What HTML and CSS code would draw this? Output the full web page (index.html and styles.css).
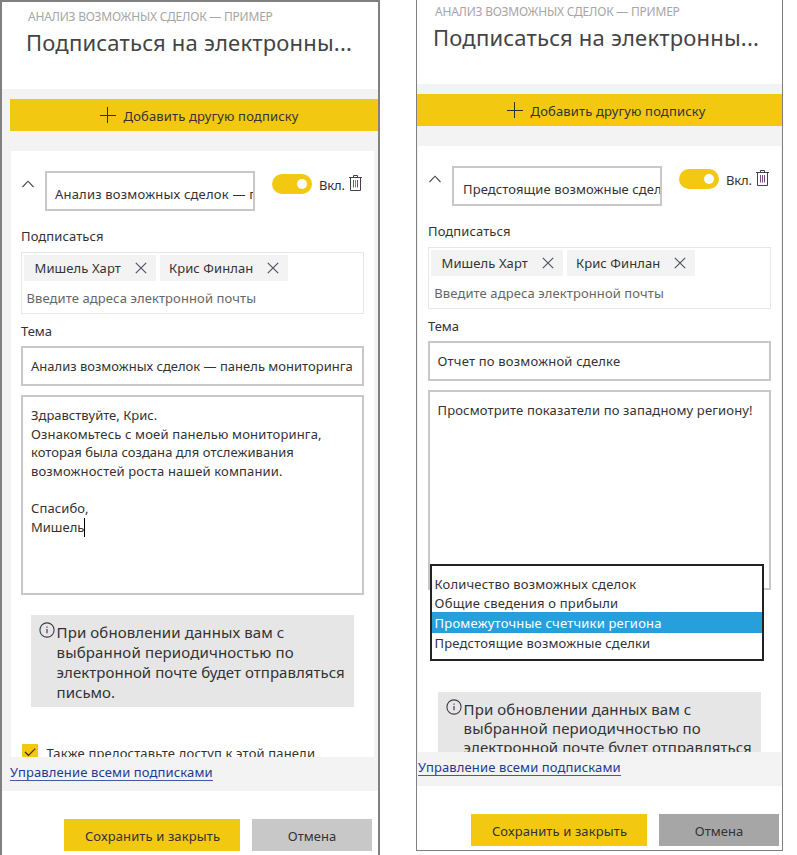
FILE: index.html
```html
<!DOCTYPE html>
<html lang="ru">
<head>
<meta charset="utf-8">
<title>Подписки</title>
<link rel="stylesheet" href="styles.css">
</head>
<body>
<svg width="0" height="0" class="defs">
  <symbol id="plus" viewBox="0 0 16 16"><path d="M0 8.5H16M7.5 0V16" fill="none" stroke="#333020" stroke-width="1"/></symbol>
  <symbol id="chevron" viewBox="0 0 12 8"><path d="M.5 7 6 1.2 11.5 7" fill="none" stroke="#4a4450" stroke-width="1.1"/></symbol>
  <symbol id="cross" viewBox="0 0 12 12"><path d="M.8.8 11.2 11.2M11.2.8.8 11.2" fill="none" stroke="#4d5260" stroke-width="1.15"/></symbol>
  <symbol id="trash" viewBox="0 0 13 16"><path d="M0 2.5H13M4.5 2.5V.5H8.5V2.5M1.5 2.5V15.5H11.5V2.5" fill="none" stroke="#45404a"/><path d="M4.5 5V12.5M8.5 5V12.5" fill="none" stroke="#7d4c86"/><path d="M6.5 5V12.5" fill="none" stroke="currentColor"/></symbol>
  <symbol id="info" viewBox="0 0 16 16"><circle cx="8" cy="8" r="7.1" fill="none" stroke="#3d3d4a" stroke-width="1.1"/><path d="M8 7V11.3M8 4.4V5.7" fill="none" stroke="#5c2c6c" stroke-width="1.2"/></symbol>
  <symbol id="check" viewBox="0 0 16 16"><path d="M3 8 6.5 11.3 13.2 4.6" fill="none" stroke="#33301c" stroke-width="1.2"/></symbol>
</svg>
<main class="screen">
  <section class="panel panel-dashboard">
    <header class="head">
      <div class="source">АНАЛИЗ ВОЗМОЖНЫХ СДЕЛОК — ПРИМЕР</div>
      <h1 class="title">Подписаться на электронны...</h1>
    </header>
    <div class="body">
      <div class="add"><svg class="i-plus"><use href="#plus"/></svg><span class="w15">Добавить другую подписку</span></div>
      <div class="card">
        <div class="row">
          <svg class="i-chevron"><use href="#chevron"/></svg>
          <div class="name w20">Анализ возможных сделок — панель</div>
          <div class="toggle"><i class="knob"></i></div>
          <span class="on">Вкл.</span>
          <svg class="i-trash"><use href="#trash"/></svg>
        </div>
        <div class="label w10">Подписаться</div>
        <div class="people">
          <div class="chips">
            <div class="chip chip-a"><span class="w10">Мишель Харт</span><svg class="i-cross"><use href="#cross"/></svg></div>
            <div class="chip chip-b"><span>Крис Финлан</span><svg class="i-cross"><use href="#cross"/></svg></div>
          </div>
          <div class="hint">Введите адреса электронной почты</div>
        </div>
        <div class="label label-subject">Тема</div>
        <div class="subject">Анализ возможных сделок — панель мониторинга</div>
        <div class="message">
          <div>Здравствуйте, Крис.</div>
          <div class="w15">Ознакомьтесь с моей панелью мониторинга,</div>
          <div class="w5">которая была создана для отслеживания</div>
          <div class="w15">возможностей роста нашей компании.</div>
          <div>&nbsp;</div>
          <div class="w10">Спасибо,</div>
          <div class="typing">Мишель<i class="caret"></i></div>
        </div>
        <div class="info">
          <svg class="i-info"><use href="#info"/></svg>
          <div class="info-text">
            <div class="w10">При обновлении данных вам с</div>
            <div class="w15">выбранной периодичностью по</div>
            <div class="w5">электронной почте будет отправляться</div>
            <div>письмо.</div>
          </div>
        </div>
        <div class="share"><span class="box"><svg class="i-check"><use href="#check"/></svg></span><span class="w15">Также предоставьте доступ к этой панели</span></div>
      </div>
    </div>
    <div class="band"><a class="link">Управление всеми подписками</a></div>
    <footer class="foot"><div class="btn btn-save">Сохранить и закрыть</div><div class="btn btn-cancel">Отмена</div></footer>
  </section>

  <section class="panel panel-report">
    <header class="head">
      <div class="source">АНАЛИЗ ВОЗМОЖНЫХ СДЕЛОК — ПРИМЕР</div>
      <h1 class="title">Подписаться на электронны...</h1>
    </header>
    <div class="body">
      <div class="add"><svg class="i-plus"><use href="#plus"/></svg><span class="w15">Добавить другую подписку</span></div>
      <div class="card">
        <div class="row">
          <svg class="i-chevron"><use href="#chevron"/></svg>
          <div class="name w10">Предстоящие возможные сделки</div>
          <div class="toggle"><i class="knob"></i></div>
          <span class="on">Вкл.</span>
          <svg class="i-trash"><use href="#trash"/></svg>
        </div>
        <div class="label w10">Подписаться</div>
        <div class="people">
          <div class="chips">
            <div class="chip chip-a"><span class="w10">Мишель Харт</span><svg class="i-cross"><use href="#cross"/></svg></div>
            <div class="chip chip-b"><span>Крис Финлан</span><svg class="i-cross"><use href="#cross"/></svg></div>
          </div>
          <div class="hint">Введите адреса электронной почты</div>
        </div>
        <div class="label label-subject">Тема</div>
        <div class="subject w20">Отчет по возможной сделке</div>
        <div class="message">
          <div class="w15">Просмотрите показатели по западному региону!</div>
          <div class="menu">
            <div class="item">Количество возможных сделок</div>
            <div class="item item-short w15">Общие сведения о прибыли</div>
            <div class="item item-active w15">Промежуточные счетчики региона</div>
            <div class="item">Предстоящие возможные сделки</div>
          </div>
        </div>
        <div class="info">
          <svg class="i-info"><use href="#info"/></svg>
          <div class="info-text">
            <div class="w10">При обновлении данных вам с</div>
            <div class="w15">выбранной периодичностью по</div>
            <div class="w5">электронной почте будет отправляться</div>
          </div>
        </div>
      </div>
    </div>
    <div class="band"><a class="link">Управление всеми подписками</a></div>
    <footer class="foot"><div class="btn btn-save">Сохранить и закрыть</div><div class="btn btn-cancel">Отмена</div></footer>
  </section>
</main>
</body>
</html>
```
FILE: styles.css
```css
* { box-sizing: border-box; }
body { margin: 0; background: #fff; color: #333; font: 13px/20px "Noto Sans", sans-serif; overflow: hidden; }
svg { display: block; flex: none; }
.defs { position: absolute; }
.screen { display: flex; align-items: flex-start; gap: 36px; height: 855px; overflow: hidden; white-space: nowrap; }
.panel { display: flex; flex-direction: column; flex: none; background: #fff; }
.panel-dashboard { width: 380px; height: 860px; border: 2px solid #808080; }
.panel-report { width: 367px; height: 851px; border: 1px solid #808080; border-top: 0; }

.w5 { letter-spacing: .05px; }
.w10 { letter-spacing: .1px; }
.w15 { letter-spacing: .15px; }
.w20 { letter-spacing: .2px; }

.head { flex: none; height: 87px; padding: 7px 0 0 24px; }
.panel-report .head { height: 84px; padding: 4px 0 0 16px; }
.source { padding-left: 2px; font-size: 12px; line-height: 16px; letter-spacing: -.22px; color: #a6a6a6; }
.title { margin: 2px 0 0; font-size: 22px; font-weight: 400; line-height: 30px; letter-spacing: .2px; color: #444; }

.body { flex: none; height: 668px; padding-top: 10px; background: #f3f3f3; overflow: hidden; }
.add { display: flex; height: 32px; margin: 0 0 20px 8px; padding: 8px 0 0 90px; background: #f2c811; line-height: 18px; }
.panel-report .add { margin-left: 0; }
.i-plus { width: 16px; height: 16px; margin-right: 7.5px; }
.card { margin: 0 4px 0 9px; padding: 20px 10px 0; height: 640px; background: #fff; }
.panel-report .card { margin: 0 1px; }

.row { display: flex; align-items: flex-start; height: 40px; }
.i-chevron { width: 12px; height: 8px; margin: 9px 11px 0 1px; }
.name { flex: none; width: 210px; height: 40px; padding: 11px 0 0 8px; border: 2px solid #c8c8c8; overflow: hidden; }
.panel-report .name { padding-left: 9px; }
.toggle { flex: none; display: flex; align-items: center; justify-content: flex-end; width: 40px; height: 20px; margin: 3px 7px 0 17px; padding-right: 5px; border-radius: 10px; background: #f2c811; }
.knob { width: 10px; height: 10px; border-radius: 50%; background: #fff; }
.on { width: 30px; margin-top: 4px; letter-spacing: -.2px; }
.i-trash { width: 13px; height: 16px; margin-top: 4px; color: #5d9c62; }
.panel-report .i-trash { color: #7d4c86; }

.label { margin: 15px 0 6px; }
.label-subject { margin: 7px 0 5px; }
.people { height: 62px; padding: 2px; border: 1px solid #e6e6e6; }
.chips { display: flex; gap: 4px; }
.chip { display: flex; align-items: center; justify-content: space-between; height: 26px; background: #f3f3f3; }
.chip-a { width: 132px; padding: 0 9px 0 10.5px; }
.chip-b { width: 128px; padding: 0 9px; letter-spacing: .08px; }
.i-cross { width: 12px; height: 12px; }
.hint { margin: 7px 0 0 2.5px; letter-spacing: .1px; color: #666; }
.panel-report .hint { margin-left: 3.3px; }
.subject { height: 40px; margin-bottom: 9px; padding: 8px 0 0 8px; border: 2px solid #c8c8c8; }
.message { position: relative; height: 200px; padding: 9px 0 0 8px; border: 2px solid #c8c8c8; line-height: 18.67px; }
.panel-report .subject, .panel-report .message { padding-left: 7.5px; }
.typing { display: flex; }
.caret { width: 1px; height: 19px; background: #000; }

.menu { position: absolute; left: 0; top: 172px; width: 334px; height: 97px; padding-top: 8px; border: 2px solid #222; background: #fff; }
.item { height: 20px; padding-left: 2.6px; line-height: 20px; letter-spacing: .16px; }
.item-short { height: 18px; line-height: 18px; letter-spacing: .2px; }
.item-active { height: 21px; line-height: 22px; background: #269fdb; color: #fff; letter-spacing: .2px; }

.info { display: flex; height: 92px; margin: 20px 10px 0; padding: 7px 0 0 8px; background: #e6e6e6; font-size: 15px; line-height: 20px; }
.panel-report .info { margin-top: 102px; line-height: 19.3px; }
.panel-report .info-text { padding-top: .6px; }
.i-info { width: 16px; height: 16px; margin-right: 1.6px; }
.share { display: flex; height: 20px; margin-top: 37px; }
.box { width: 16px; height: 16px; margin: 0 8.5px 0 1px; background: #f2c811; }
.i-check { width: 16px; height: 16px; }
.share > span:last-child { line-height: 18px; }

.band { flex: none; height: 34px; padding: 5px 0 0 8px; background: #f3f3f3; }
.panel-report .band { padding-left: 1px; }
.link { display: block; width: 203px; height: 19px; border-bottom: 1px solid #4557a6; color: #1f3a93; letter-spacing: .12px; }
.foot { display: flex; gap: 12px; padding: 28px 0 0 62px; }
.panel-report .foot { padding-left: 54px; }
.btn { height: 32px; padding-top: 7px; text-align: center; }
.btn-save { width: 176px; padding-left: 1px; background: #f2c811; letter-spacing: .12px; }
.btn-cancel { width: 120px; background: #c8c8c8; }
.panel-report .btn-cancel { background: #a6a6a6; }
```
